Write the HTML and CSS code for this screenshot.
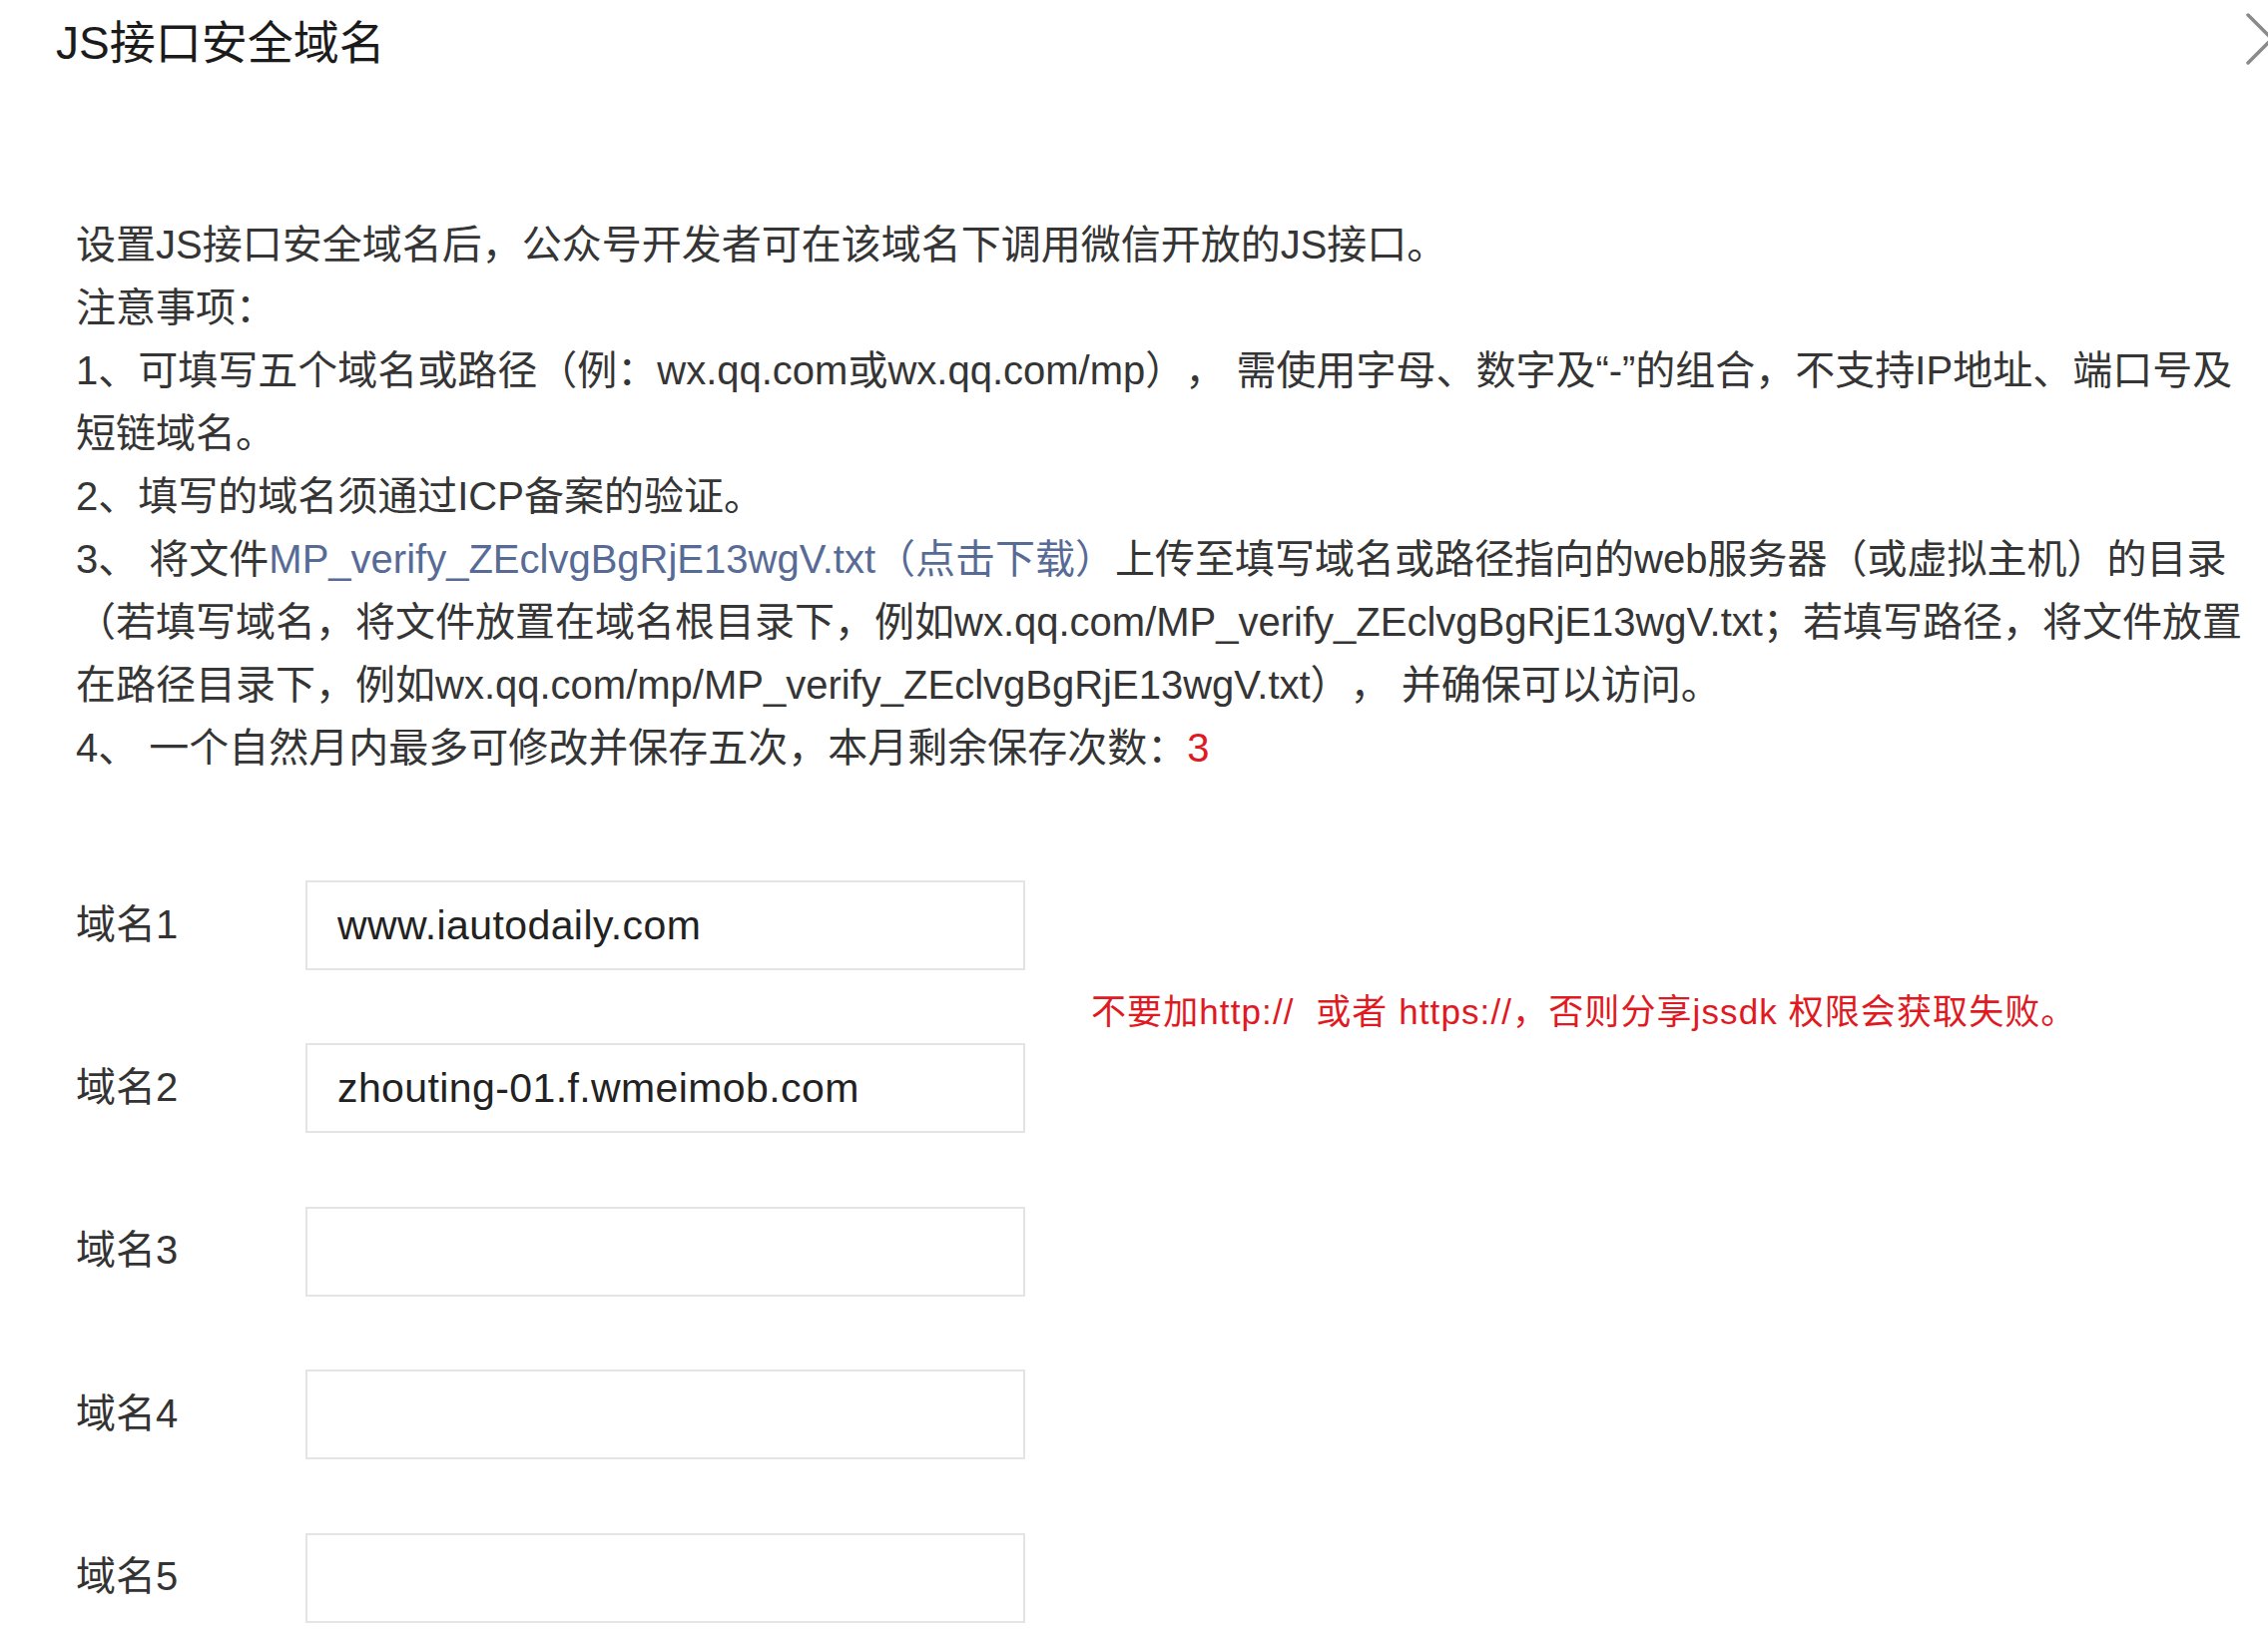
FILE: index.html
```html
<!DOCTYPE html>
<html lang="zh-CN">
<head>
<meta charset="utf-8">
<title>JS接口安全域名</title>
<link rel="stylesheet" href="styles.css">
</head>
<body>
<div class="page">
  <header class="dialog-head">
    <h1 class="dialog-title">JS接口安全域名</h1>
    <button class="close-btn" type="button" aria-label="关闭">
      <svg width="22" height="52" viewBox="0 0 22 52"><path d="M2 2 L50 50 M2 50 L50 2" fill="none" stroke="#8a8a8a" stroke-width="3.5" stroke-linecap="round"/></svg>
    </button>
  </header>

  <section class="intro">
    <p>设置JS接口安全域名后，公众号开发者可在该域名下调用微信开放的JS接口。</p>
    <p>注意事项：</p>
    <p>1、可填写五个域名或路径（例：wx.qq.com或wx.qq.com/mp）， 需使用字母、数字及“-”的组合，不支持IP地址、端口号及<br>短链域名。</p>
    <p>2、填写的域名须通过ICP备案的验证。</p>
    <p>3、 将文件<a class="link" href="#">MP_verify_ZEclvgBgRjE13wgV.txt（点击下载）</a>上传至填写域名或路径指向的web服务器（或虚拟主机）的目录<br>（若填写域名，将文件放置在域名根目录下，例如wx.qq.com/MP_verify_ZEclvgBgRjE13wgV.txt；若填写路径，将文件放置<br>在路径目录下，例如wx.qq.com/mp/MP_verify_ZEclvgBgRjE13wgV.txt）， 并确保可以访问。</p>
    <p>4、 一个自然月内最多可修改并保存五次，本月剩余保存次数：<span class="count">3</span></p>
  </section>

  <form class="domain-form">
    <label class="field-label">域名1</label>
    <input class="field-input" type="text" value="www.iautodaily.com">
    <label class="field-label">域名2</label>
    <input class="field-input" type="text" value="zhouting-01.f.wmeimob.com">
    <label class="field-label">域名3</label>
    <input class="field-input" type="text" value="">
    <label class="field-label">域名4</label>
    <input class="field-input" type="text" value="">
    <label class="field-label">域名5</label>
    <input class="field-input" type="text" value="">
    <p class="field-tip">不要加http://  或者 https://，否则分享jssdk 权限会获取失败。</p>
  </form>
</div>
</body>
</html>
```

FILE: styles.css
```css
html, body {
  margin: 0;
  background: #ffffff;
}

body {
  font-family: "Liberation Sans", "Noto Sans CJK SC", sans-serif;
  color: #353535;
  text-spacing-trim: space-all;
}

.page {
  padding-top: 10px;
}

.dialog-head {
  position: relative;
  height: 66px;
  padding-left: 56px;
}

.dialog-title {
  margin: 0;
  font-size: 46px;
  font-weight: 400;
  line-height: 66px;
  color: #1b1b1b;
}

.close-btn {
  position: absolute;
  top: 3px;
  right: 0;
  padding: 0;
  margin: 0;
  border: none;
  background: none;
  line-height: 0;
}

.intro {
  margin-top: 137.5px;
  padding-left: 76px;
  font-size: 40px;
  line-height: 63px;
}

.intro p {
  margin: 0;
  white-space: pre;
}

.link {
  color: #576b95;
  text-decoration: none;
}

.count {
  color: #e01a22;
}

.domain-form {
  margin: 101.5px 0 0 0;
  padding-left: 76px;
  display: grid;
  grid-template-columns: 230px 721px auto;
  grid-auto-rows: 90px;
  row-gap: 73.4px;
}

.field-label {
  grid-column: 1;
  align-self: center;
  margin-bottom: 9px;
  font-size: 40px;
  color: #333333;
}

.field-input {
  grid-column: 2;
  box-sizing: border-box;
  width: 721px;
  height: 90px;
  margin: 0;
  padding: 0 0 0 30px;
  border: 2px solid #e4e4e4;
  border-radius: 0;
  background: #ffffff;
  font-family: inherit;
  font-size: 41px;
  letter-spacing: 0.4px;
  color: #222222;
  outline: none;
}

.field-tip {
  grid-column: 3;
  grid-row: 1 / 3;
  align-self: center;
  margin: 4px 0 0 66px;
  font-size: 35px;
  letter-spacing: 1.1px;
  color: #e01a22;
  white-space: pre;
}
```
